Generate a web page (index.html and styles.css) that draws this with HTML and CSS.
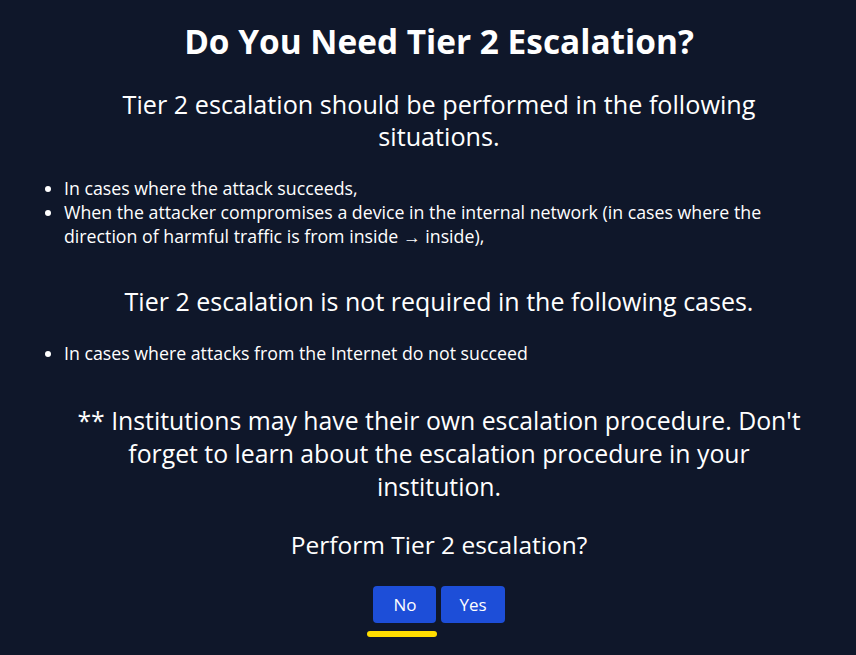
FILE: index.html
```html
<!DOCTYPE html>
<html lang="en">
<head>
<meta charset="utf-8">
<title>Tier 2 Escalation</title>
<link rel="stylesheet" href="styles.css">
</head>
<body>
<main class="page">
  <h1 class="title">Do You Need Tier 2 Escalation?</h1>
  <p class="lead">Tier 2 escalation should be performed in the following situations.</p>
  <ul class="list list-first">
    <li>In cases where the attack succeeds,</li>
    <li>When the attacker compromises a device in the internal network (in cases where the direction of harmful traffic is from inside → inside),</li>
  </ul>
  <p class="lead lead-second">Tier 2 escalation is not required in the following cases.</p>
  <ul class="list list-second">
    <li>In cases where attacks from the Internet do not succeed</li>
  </ul>
  <p class="note">** Institutions may have their own escalation procedure. Don't forget to learn about the escalation procedure in your institution.</p>
  <p class="question">Perform Tier 2 escalation?</p>
  <div class="actions">
    <button class="btn btn-focus" type="button">No</button>
    <button class="btn" type="button">Yes</button>
  </div>
</main>
</body>
</html>
```
FILE: styles.css
```css
html, body {
  margin: 0;
  padding: 0;
  background: #0f172a;
  color: #ffffff;
  font-family: "Open Sans", "Noto Sans", sans-serif;
}

.page {
  box-sizing: border-box;
  width: 856px;
  height: 655px;
  padding: 23px 24px 0 46px;
  overflow: hidden;
}

.title {
  margin: 0;
  font-size: 33.4px;
  line-height: 36px;
  font-weight: 700;
  text-align: center;
}

.lead {
  margin: 29px 0 0;
  padding: 0 23px;
  font-size: 25.2px;
  line-height: 32px;
  font-weight: 400;
  text-align: center;
}

.lead-second {
  margin-top: 37px;
  font-size: 25px;
}

.list {
  margin: 24px 0 0;
  padding-left: 18px;
  font-size: 17.75px;
  line-height: 24px;
}

.list-second {
  margin-top: 24px;
}

.note {
  margin: 39px 0 0;
  padding: 0 23px;
  font-size: 24.8px;
  line-height: 33px;
  text-align: center;
}

.question {
  margin: 27px 0 0;
  font-size: 24.5px;
  line-height: 30px;
  text-align: center;
}

.actions {
  margin-top: 26px;
  display: flex;
  justify-content: center;
  gap: 5px;
}

.btn {
  position: relative;
  height: 37px;
  min-width: 63px;
  padding: 0 18px;
  border: 0;
  border-radius: 4px;
  background: #1d4ed8;
  color: #ffffff;
  font-family: inherit;
  font-size: 17px;
  cursor: pointer;
}

.btn-focus::after {
  content: "";
  position: absolute;
  left: -6px;
  bottom: -14px;
  width: 70px;
  height: 6px;
  border-radius: 3px;
  background: #ffdd00;
}
```
